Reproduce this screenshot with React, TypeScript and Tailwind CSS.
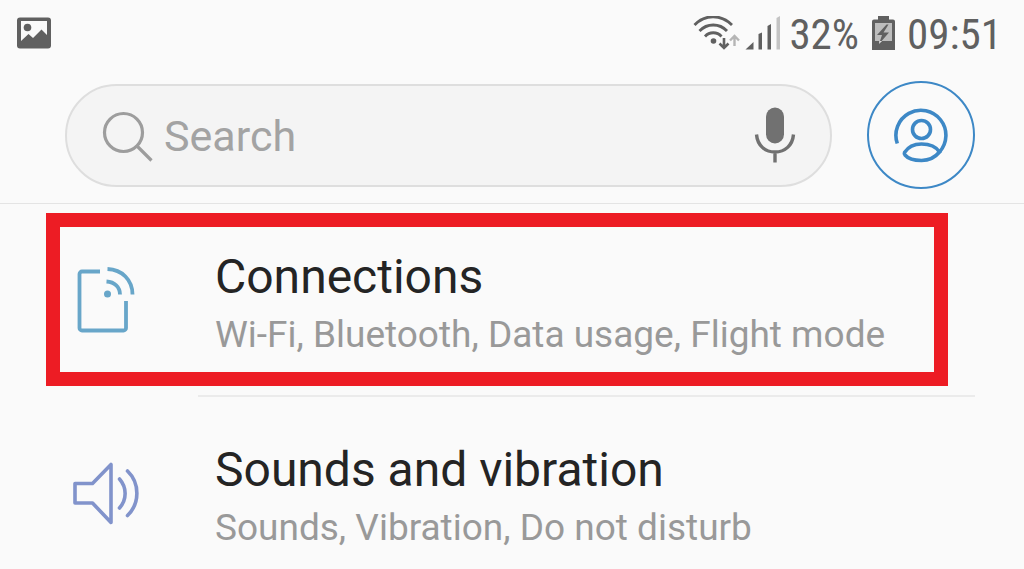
import type { ReactNode } from "react";

function StatusBar() {
  return (
    <div className="flex h-[68px] items-center justify-between pr-[22px] pl-4 text-[#606060]">
      <svg className="h-9 w-9" viewBox="0 0 36 36" role="img" aria-label="Screenshot saved">
        <path
          fillRule="evenodd"
          fill="currentColor"
          d="M4 1.500h28a3 3 0 0 1 3 3v25a3 3 0 0 1-3 3H4a3 3 0 0 1-3-3v-25a3 3 0 0 1 3-3ZM5 5v20l7.500-7 4.500 4 8.500-8.500L31 19V5Z"
        />
        <circle cx="11.500" cy="11.500" r="3.800" fill="currentColor" />
      </svg>
      <div className="flex items-center">
        <svg className="h-9 w-[90px]" viewBox="0 0 90 36" role="img" aria-label="Wi-Fi and mobile signal">
          <g fill="none" stroke="currentColor" strokeWidth="2.800">
            <path d="M3.500 9C14-2 30-2 41 9" />
            <path d="M8.500 15C16 7 28.500 7 36 15" />
            <path d="M14 20.500C18.500 15.500 26 15.500 30.500 20.500" />
            <path d="M33 22v10M28.500 27.500l4.500 4.500 4.500-4.500" strokeWidth="2.600" />
            <path d="M43.500 30V20M39 24.500l4.500-4.500 4.500 4.500" stroke="#b5b5b5" strokeWidth="2.400" />
          </g>
          <circle cx="22.500" cy="25" r="2.800" fill="currentColor" />
          <path d="M54.500 33.500h8v-7.500Z" fill="currentColor" />
          <path d="M67.500 18l3.500-1.500v17h-3.500ZM76.500 10l3.500-2v25.500h-3.500Z" fill="currentColor" />
          <path d="M85.500 2l3.500-2v33.500h-3.500Z" fill="#c4c4c4" />
        </svg>
        <span className="ml-2 font-[Roboto_Condensed,Roboto,sans-serif] text-[43px] leading-[48px]">32%</span>
        <svg className="mx-3 h-9 w-6" viewBox="0 0 24 36" role="img" aria-label="Battery charging">
          <path d="M7 0h11v3.500h4a2 2 0 0 1 2 2V34H1V5.500a2 2 0 0 1 2-2h4Z" fill="currentColor" />
          <path d="M4 7h17v18H4Z" fill="#bdbdbd" />
          <path d="M15.500 8.500 6 19h5L8 28l10-11.500h-5.500l5-8Z" fill="currentColor" />
          <path d="M8.300 25h2.800L8 28Z" fill="#e0e0e0" />
        </svg>
        <span className="font-[Roboto_Condensed,Roboto,sans-serif] text-[43px] leading-[48px]">09:51</span>
      </div>
    </div>
  );
}

function SearchHeader() {
  return (
    <header className="flex items-center gap-[35px] border-b border-[#e4e4e4] pt-[13px] pr-[49px] pb-[14px] pl-[65px]">
      <form
        role="search"
        className="flex h-[103px] min-w-0 flex-1 items-center rounded-full border-2 border-[#dedede] bg-[#f4f4f4] pr-[33px] pl-[34px]"
      >
        <label htmlFor="search" className="shrink-0" aria-label="Search">
          <svg className="h-[54px] w-[54px]" viewBox="0 0 54 54" fill="none" stroke="#9d9d9d" strokeWidth="3.200">
            <circle cx="22.500" cy="24.500" r="19" />
            <path d="M36 38 50.500 52.500" />
          </svg>
        </label>
        <input
          id="search"
          type="search"
          placeholder="Search"
          className="ml-[9px] min-w-0 flex-1 bg-transparent pt-[2px] text-[43px] leading-[52px] text-[#252525] outline-none placeholder:text-[#a3a3a3]"
        />
        <button type="button" aria-label="Voice search" className="shrink-0">
          <svg className="h-14 w-11" viewBox="0 0 44 56">
            <rect x="13" y="0.500" width="18" height="36" rx="9" fill="#717171" />
            <path d="M3.500 27.500C4.500 38.500 12 45 22 45s17.500-6.500 18.500-17.500M22 45v10.500" fill="none" stroke="#717171" strokeWidth="3.400" />
          </svg>
        </button>
      </form>
      <button
        type="button"
        aria-label="Account"
        className="flex h-[108px] w-[108px] shrink-0 items-center justify-center rounded-full border-2 border-[#3d88c6]"
      >
        <svg className="h-14 w-14" viewBox="0 0 56 56" fill="none" stroke="#3d88c6" strokeWidth="3.600">
          <path d="M4.300 36.500A25 25 0 1 1 46.500 45" />
          <circle cx="28.500" cy="22.500" r="9" />
          <path d="M11.500 45.500c3.500-5.500 9.500-8.500 17-8.500S43 39.500 46.500 45C42 50.500 36 53.500 28.500 53.500S14.500 51 12 48Q10.900 46.800 11.500 45.500Z" />
        </svg>
      </button>
    </header>
  );
}

function ConnectionsIcon() {
  return (
    <svg className="h-[68px] w-[68px]" viewBox="0 0 68 68" fill="none" stroke="#68a6c9" strokeWidth="3.800" aria-hidden="true">
      <path d="M29 5.500H11a2.500 2.500 0 0 0-2.500 2.500v54a2.500 2.500 0 0 0 2.500 2.500h41.500a2.500 2.500 0 0 0 2.500-2.500V35" />
      <path d="M36.500 3C51 3.500 61.500 14 61.500 28.500M35.500 15.500C43.500 16 49 21 49 28.500" />
      <circle cx="36.500" cy="28" r="3.500" fill="#68a6c9" stroke="none" />
    </svg>
  );
}

function SoundIcon() {
  return (
    <svg
      className="h-[68px] w-[68px]"
      viewBox="0 0 68 68"
      fill="none"
      stroke="#8193cb"
      strokeWidth="3.600"
      strokeLinecap="round"
      strokeLinejoin="round"
      aria-hidden="true"
    >
      <path d="M4 24.500h17.500L40 5.500v58L21.500 44H4Z" />
      <path d="M48.500 20C56 28.500 56 40.500 48.500 49M56.500 12C69 24 69 44.500 56.500 56.500" />
    </svg>
  );
}

type SettingProps = {
  title: string;
  summary: string;
  icon: ReactNode;
  highlighted?: boolean;
};

function Setting({ title, summary, icon, highlighted }: SettingProps) {
  return (
    <li className="relative">
      <a href="#" className="flex pl-[71px]">
        <span className="mt-[62px] shrink-0">{icon}</span>
        <span className="mr-[49px] ml-[59px] min-w-0 flex-1 border-b-2 border-[#ebebeb] pt-[43px] pb-8 pl-[17px]">
          <span className="block text-[48px] leading-[60px] text-[#242424]">{title}</span>
          <span className="block text-[37px] leading-[56px] text-[#999999]">{summary}</span>
        </span>
      </a>
      {highlighted && (
        <span className="pointer-events-none absolute top-[9px] right-[76px] bottom-[11px] left-[46px] border-14 border-[#ed1c24]" />
      )}
    </li>
  );
}

export default function App() {
  return (
    <main className="h-screen overflow-hidden bg-[#fafafa] font-[Roboto,sans-serif]">
      <StatusBar />
      <SearchHeader />
      <ul>
        <Setting title="Connections" summary="Wi-Fi, Bluetooth, Data usage, Flight mode" icon={<ConnectionsIcon />} highlighted />
        <Setting title="Sounds and vibration" summary="Sounds, Vibration, Do not disturb" icon={<SoundIcon />} />
      </ul>
    </main>
  );
}
